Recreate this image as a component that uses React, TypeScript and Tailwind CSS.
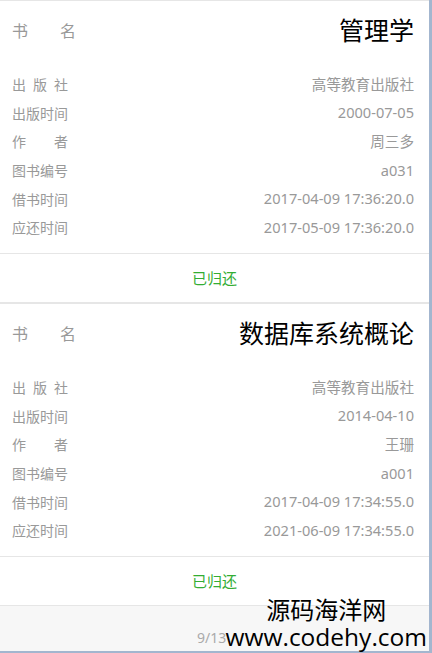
import React from 'react';

const books = [
  {
    title: '管理学',
    publisher: '高等教育出版社',
    pubDate: '2000-07-05',
    author: '周三多',
    code: 'a031',
    borrowed: '2017-04-09 17:36:20.0',
    due: '2017-05-09 17:36:20.0',
  },
  {
    title: '数据库系统概论',
    publisher: '高等教育出版社',
    pubDate: '2014-04-10',
    author: '王珊',
    code: 'a001',
    borrowed: '2017-04-09 17:34:55.0',
    due: '2021-06-09 17:34:55.0',
  },
];

const font = { fontFamily: '"Noto Sans", "Noto Sans CJK SC", sans-serif' };

// spread label characters across a fixed width, like 出 版 社
const Label = ({ text }: { text: string }) => (
  <span className="flex w-[56px] justify-between text-[14px]">
    {text.split('').map((c, i) => (
      <span key={i}>{c}</span>
    ))}
  </span>
);

const Row = ({ label, value }: { label: string; value: string }) => (
  <div className="flex h-[28.6px] items-center justify-between text-[#999]">
    <Label text={label} />
    <span className="text-[14.6px]">{value}</span>
  </div>
);

const BookCard = ({ book }: { book: (typeof books)[number] }) => (
  <div className="h-[303px] border-t border-b border-[#e6e6e6] bg-white">
    <div className="h-[252px] pl-3 pr-[15px]">
      <div className="flex h-[60px] items-center justify-between">
        <span className="flex w-[64px] justify-between text-[16px] text-[#999]">
          <span>书</span>
          <span>名</span>
        </span>
        <span className="text-[25px] text-black">{book.title}</span>
      </div>
      <div className="pt-[9.5px]">
        <Row label="出版社" value={book.publisher} />
        <Row label="出版时间" value={book.pubDate} />
        <Row label="作者" value={book.author} />
        <Row label="图书编号" value={book.code} />
        <Row label="借书时间" value={book.borrowed} />
        <Row label="应还时间" value={book.due} />
      </div>
    </div>
    <div className="flex h-[49px] items-center justify-center border-t border-[#e6e6e6] text-[15px] text-[#33ad33]">
      已归还
    </div>
  </div>
);

export default function App() {
  return (
    <div style={font} className="relative h-[653px] w-[432px] overflow-hidden bg-white">
      <div className="flex h-[653px] flex-col border-r-[3px] border-b-[2px] border-[#a3b6cf] bg-[#f7f7f7]">
        {books.map((b) => (
          <BookCard key={b.code} book={b} />
        ))}
        <div className="flex flex-1 items-end pb-[3px] pl-[197px] text-[14px] text-[#aaa]">
          9/13
        </div>
      </div>

      {/* site watermark over the bottom right */}
      <div className="absolute right-[5px] bottom-[4px] flex flex-col items-center gap-[3px] leading-none text-black">
        <span className="text-[24px]">源码海洋网</span>
        <span className="text-[24.5px]" style={{ fontFamily: '"Open Sans", sans-serif' }}>
          www.codehy.com
        </span>
      </div>
    </div>
  );
}
